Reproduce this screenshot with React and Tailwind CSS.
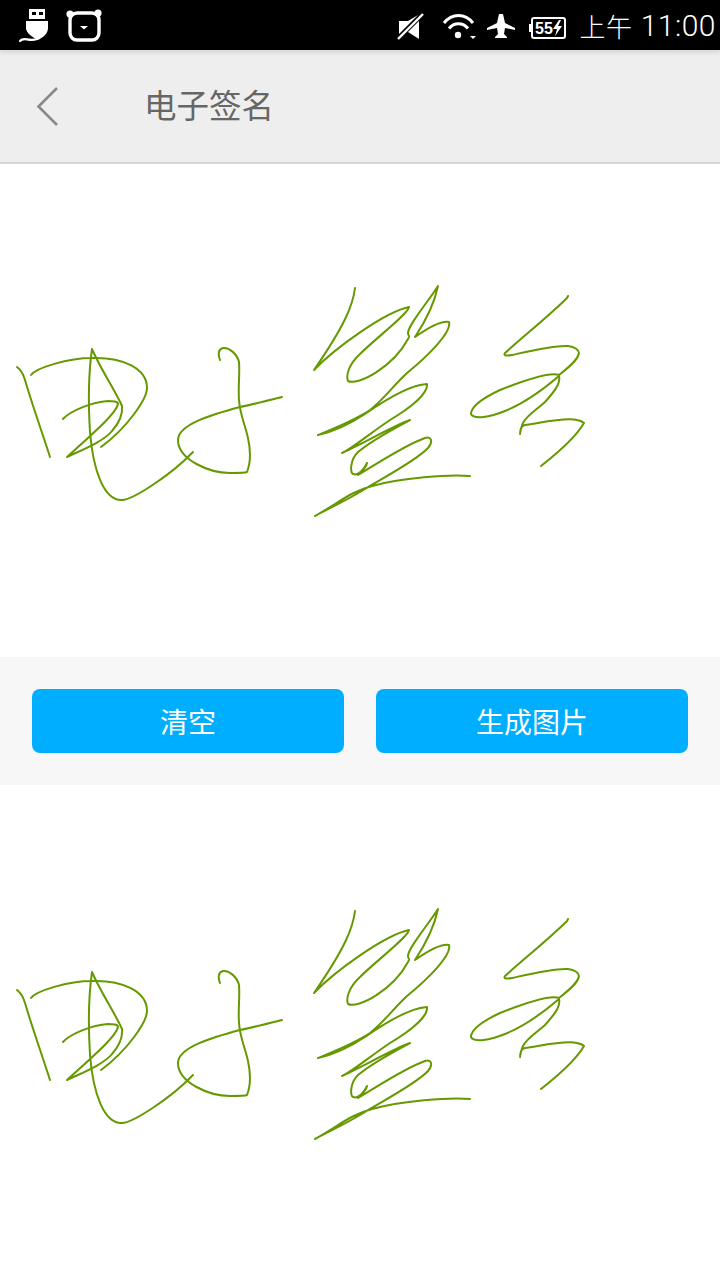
const strokes = [
    "M17 367 C21 370 23 373 25 380 C32 404 42 432 50 457",
    "M31 375 C36 368 68 358 92 358 C122 357 147 368 147 388 C147 399 127 428 101 447",
    "M63 419 C70 411 92 402 108 401 C113 401 118 401 118 404 C116 414 90 436 67 457 C84 449 104 441 112 431 C119 423 123 415 122 406 C116 392 100 368 92 349 C89 370 88 400 90 432 C93 470 104 501 122 500 C132 500 170 476 193 452",
    "M282 397 C262 402 250 405 240 407 C214 414 178 424 178 440 C178 460 210 473 230 473 C238 473 245 473 247 472 C251 462 251 452 248 438 C245 424 240 415 239 400 C238 385 240 375 239 362 C237 354 229 347 223 348 C218 349 218 355 220 360",
    "M355 288 C353 305 345 325 314 370 C335 348 385 312 409 307 C409 313 375 339 360 354 C348 365 346 376 348 381 C358 386 393 367 408 339 C411 334 408 338 408 333 C408 325 428 302 438 286 C434 305 425 322 415 337 C425 330 440 320 449 322 C452 332 428 356 407 373 C392 387 385 398 370 410 C355 420 335 428 318 435 C332 432 350 424 365 414 C385 400 410 385 427 384 C428 392 415 405 390 420 C372 432 350 450 342 453 C360 445 395 425 410 420 C395 428 372 440 358 452 C350 460 350 472 353 474 C358 476 364 470 367 463 C366 468 361 472 358 475 C375 465 405 445 425 438 C432 436 433 442 428 448 C415 462 375 482 360 492 C345 501 330 508 315 516 C340 502 350 492 372 486 C400 478 450 474 470 476",
    "M568 296 L567 298 C550 315 525 335 505 353 C503 356 507 356 512 355 C530 351 555 345 568 346 C575 347 579 350 579 353 C578 360 568 368 559 375 C549 371 520 382 500 390 C483 398 471 407 471 414 C474 420 490 417 505 411 C525 403 545 388 559 376 C561 384 553 393 545 402 C535 411 527 415 523 423 C521 428 520 430 520 434 C521 428 521 426 525 425 C540 423 565 417 577 420 C582 421 584 423 584 423 C576 437 555 455 541 466",
];

const Signature = ({ viewBox }) => (
    <svg viewBox={viewBox} className="w-full h-full block" fill="none">
        {strokes.map((d, i) => (
            <path key={i} d={d} stroke="#669900" strokeWidth="2" strokeLinecap="round" strokeLinejoin="round" />
        ))}
    </svg>
);

const StatusLeft = () => (
    <svg width="110" height="50" viewBox="0 0 110 50" fill="none" className="absolute left-0 top-0">
        <path d="M29 9H45V19H29Z M32 12V15H36V12Z M39 12V15H43V12Z" fill="#fff" fillRule="evenodd" />
        <path d="M26 21H48V28C48 33 44 37 38 40C32 37 26 33 26 28Z" fill="#fff" />
        <path d="M20 41C24 36 28 42 37 39" stroke="#fff" strokeWidth="2.2" strokeLinecap="round" />
        <rect x="70" y="13" width="29" height="27" rx="7" stroke="#fff" strokeWidth="3.4" />
        <circle cx="70" cy="14" r="3.6" fill="#fff" />
        <circle cx="98" cy="13" r="3.6" fill="#fff" />
        <path d="M80 26H88L84 29.5Z" fill="#fff" />
    </svg>
);

const StatusRight = () => (
    <svg width="190" height="50" viewBox="390 0 190 50" fill="none" className="absolute left-[390px] top-0">
        <path d="M399 21H408L418 15L399 34Z" fill="#fff" />
        <path d="M408 32L419 21V39Z" fill="#fff" />
        <path d="M398 39L423 14" stroke="#fff" strokeWidth="2.4" />
        <path d="M444 23C452 13 465 13 473 23" stroke="#fff" strokeWidth="3" />
        <path d="M449 28.5C454 22 463 22 468 28.5" stroke="#fff" strokeWidth="3" />
        <circle cx="458" cy="35" r="3.2" fill="#fff" />
        <path d="M470 36H476L473 39Z" fill="#fff" />
        <path d="M499 14H503L505 23L515 28V30L505 28L504 34L507 37V38H495V37L498 34L497 28L487 30V28L497 23Z" fill="#fff" />
        <rect x="532" y="18" width="33" height="20" rx="2" stroke="#fff" strokeWidth="2" />
        <rect x="529" y="24" width="2.5" height="8" fill="#fff" />
        <text x="535" y="34" fill="#fff" fontSize="16" fontWeight="700" fontFamily="Liberation Sans, sans-serif">55</text>
        <path d="M559 20L553 29H557L555 36L562 26H558L561 20Z" fill="#fff" />
    </svg>
);

export default function App() {
    return (
        <div className="w-[720px] h-[1280px] flex flex-col bg-white overflow-hidden font-['Roboto','Noto_Sans_CJK_SC',sans-serif]">
            <div className="relative z-20 h-[50px] shrink-0 bg-black shadow-[0_2px_5px_rgba(0,0,0,0.12)]">
                <StatusLeft />
                <StatusRight />
                <div className="absolute right-[4px] top-0 h-[50px] flex items-center text-white text-[30px] tracking-[0.5px]">
                    <span className="font-['Noto_Sans_CJK_SC',sans-serif] font-light text-[26px] mr-[8px]">上午</span>
                    <span className="font-light">11:00</span>
                </div>
            </div>

            <div className="relative z-10 h-[114px] shrink-0 bg-[#eeeeee] border-b-2 border-[#d6d6d6] flex items-center">
                <svg width="24" height="42" viewBox="0 0 24 42" fill="none" className="ml-[36px] mt-[1px]">
                    <path d="M21 2L2.5 20.5L21 39" stroke="#888888" strokeWidth="2.6" />
                </svg>
                <span className="ml-[84px] mb-[3px] text-[32.5px] text-[#666666] font-['Noto_Sans_CJK_SC',sans-serif]">电子签名</span>
            </div>

            <div className="h-[493px] shrink-0">
                <Signature viewBox="0 164 720 493" />
            </div>

            <div className="h-[128px] shrink-0 bg-[#f7f7f7] p-8 flex gap-8">
                <button className="flex-1 rounded-lg bg-[#00aeff] text-white text-[28px] font-['Noto_Sans_CJK_SC',sans-serif]">清空</button>
                <button className="flex-1 rounded-lg bg-[#00aeff] text-white text-[28px] font-['Noto_Sans_CJK_SC',sans-serif]">生成图片</button>
            </div>

            <div className="flex-1">
                <Signature viewBox="0 162 720 495" />
            </div>
        </div>
    );
}
